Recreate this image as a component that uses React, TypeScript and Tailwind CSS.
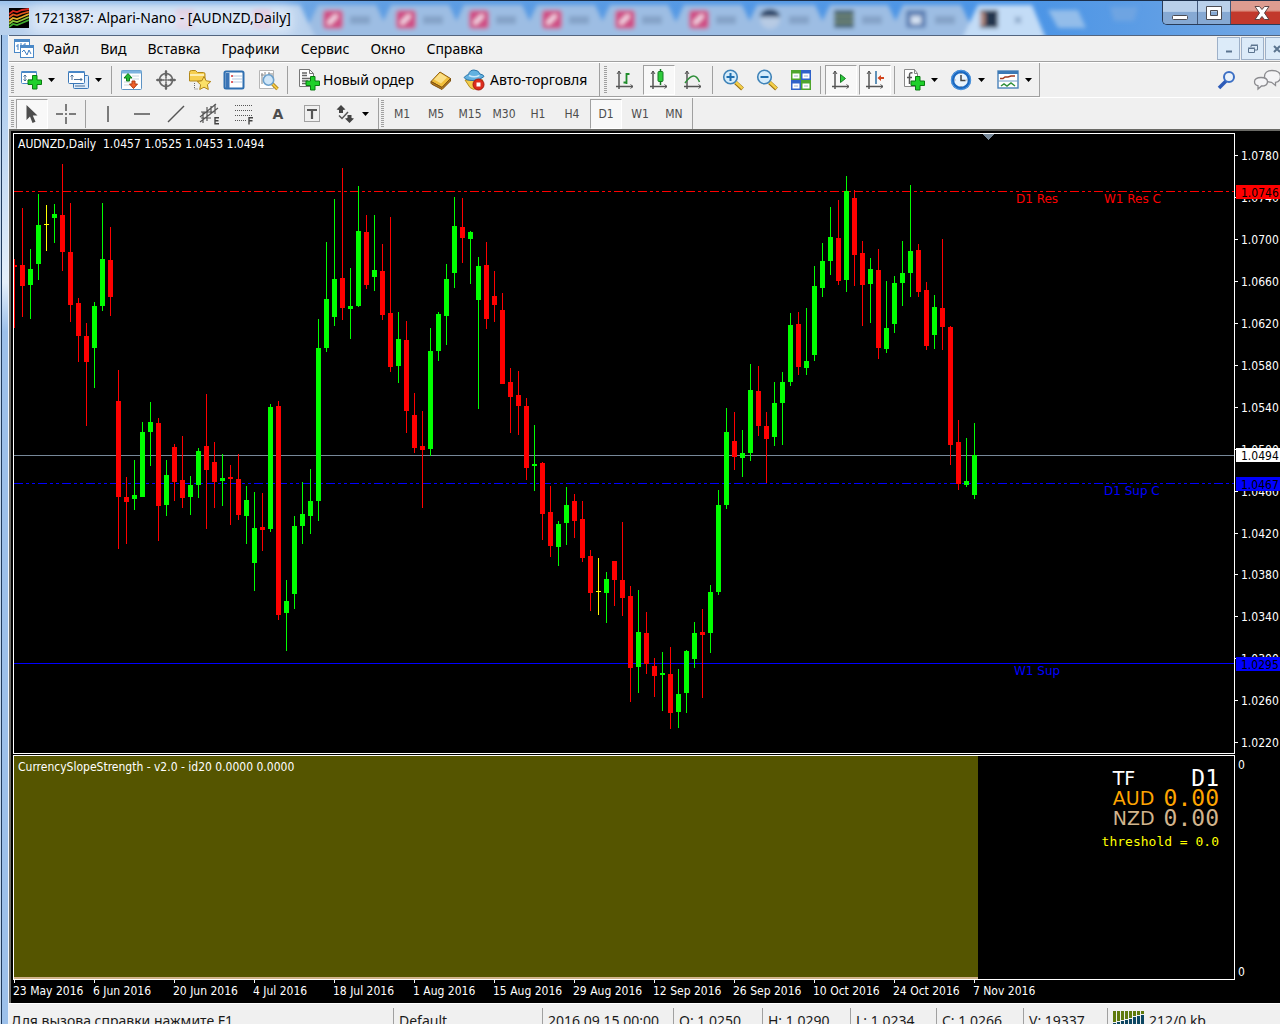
import React from 'react';

type Candle = [string, number, number, number, number];

// colour, high, body top, body bottom, low (rows in the terminal window)
const candles: Candle[] = [
  ['r', 259, 265, 267, 328], ['r', 208, 265, 286, 317], ['g', 249, 269, 285, 319], ['g', 194, 225, 264, 280],
  ['y', 205, 224, 225, 251], ['g', 204, 214, 218, 243], ['r', 164, 215, 252, 271], ['r', 203, 252, 305, 322],
  ['r', 298, 303, 336, 362], ['r', 323, 336, 362, 426], ['g', 302, 306, 348, 388], ['g', 203, 259, 306, 311],
  ['r', 227, 260, 297, 316], ['r', 370, 401, 497, 549], ['r', 477, 497, 502, 544], ['g', 460, 495, 499, 510],
  ['g', 422, 432, 497, 497], ['g', 402, 422, 432, 466], ['r', 418, 423, 506, 541], ['g', 460, 475, 505, 516],
  ['r', 444, 447, 482, 501], ['r', 436, 480, 498, 508], ['g', 476, 485, 497, 515], ['g', 448, 451, 485, 498],
  ['r', 394, 446, 470, 529], ['r', 442, 462, 482, 508], ['g', 454, 478, 481, 506], ['r', 465, 477, 479, 525],
  ['r', 454, 479, 515, 520], ['g', 486, 500, 516, 544], ['g', 492, 528, 563, 591], ['r', 493, 527, 530, 551],
  ['g', 404, 407, 529, 532], ['r', 401, 406, 615, 620], ['g', 580, 601, 613, 651], ['g', 516, 526, 594, 609],
  ['g', 482, 514, 526, 544], ['g', 469, 501, 516, 534], ['g', 319, 348, 501, 521], ['g', 242, 299, 348, 352],
  ['g', 199, 279, 317, 326], ['r', 168, 278, 308, 320], ['g', 268, 306, 309, 339], ['g', 186, 231, 306, 307],
  ['r', 215, 232, 285, 289], ['g', 215, 270, 277, 291], ['r', 244, 271, 315, 320], ['r', 217, 313, 367, 372],
  ['g', 312, 339, 366, 383], ['r', 321, 340, 411, 433], ['r', 393, 415, 448, 453], ['r', 411, 446, 450, 508],
  ['g', 328, 351, 449, 456], ['g', 312, 314, 351, 361], ['g', 264, 279, 316, 345], ['g', 197, 226, 273, 288],
  ['r', 198, 227, 238, 263], ['g', 231, 232, 239, 284], ['g', 257, 266, 300, 409], ['r', 242, 265, 319, 329],
  ['r', 271, 296, 305, 322], ['r', 293, 310, 384, 384], ['r', 368, 382, 397, 433], ['r', 371, 395, 406, 435],
  ['r', 398, 406, 468, 480], ['g', 425, 464, 466, 491], ['r', 462, 463, 514, 540], ['r', 486, 512, 546, 557],
  ['g', 521, 524, 547, 566], ['g', 487, 505, 523, 545], ['r', 494, 501, 521, 538], ['r', 501, 519, 558, 562],
  ['r', 550, 556, 593, 611], ['y', 558, 591, 592, 615], ['g', 572, 579, 593, 623], ['r', 561, 561, 580, 606],
  ['r', 522, 580, 598, 616], ['r', 586, 596, 668, 702], ['g', 590, 632, 667, 693], ['r', 612, 633, 664, 674],
  ['r', 658, 666, 676, 697], ['g', 652, 673, 675, 711], ['r', 647, 674, 713, 729], ['g', 669, 694, 712, 728],
  ['g', 650, 651, 693, 713], ['g', 622, 633, 659, 668], ['r', 609, 632, 635, 698], ['g', 585, 592, 633, 653],
  ['g', 490, 505, 592, 595], ['g', 408, 432, 505, 509], ['r', 412, 441, 457, 470], ['g', 430, 453, 458, 477],
  ['g', 364, 390, 453, 461], ['r', 366, 391, 426, 436], ['r', 412, 426, 439, 483], ['g', 382, 403, 437, 446],
  ['g', 372, 382, 403, 445], ['g', 313, 325, 382, 386], ['r', 312, 324, 367, 375], ['g', 308, 361, 368, 375],
  ['g', 266, 286, 355, 361], ['g', 243, 261, 288, 297], ['g', 207, 237, 261, 275], ['r', 200, 238, 281, 285],
  ['g', 176, 191, 280, 292], ['r', 190, 198, 255, 286], ['r', 241, 253, 285, 326], ['g', 258, 269, 284, 323],
  ['r', 249, 270, 348, 359], ['g', 281, 328, 349, 353], ['g', 276, 283, 324, 333], ['g', 241, 273, 283, 306],
  ['g', 185, 251, 273, 297], ['r', 244, 250, 292, 297], ['r', 282, 290, 346, 350], ['g', 295, 307, 335, 349],
  ['r', 239, 308, 327, 350], ['r', 326, 327, 445, 465], ['r', 420, 442, 484, 490], ['g', 438, 481, 485, 487],
  ['g', 423, 455, 495, 499],
];

const candleColor: Record<string, string> = { r: '#ff0000', g: '#00ff00', y: '#ffff00' };

// first drawable row of the price pane
const PANE_TOP = 134;

const priceMarks: [string, number][] = [
  ['1.0780', 155], ['1.0740', 197], ['1.0700', 239], ['1.0660', 281], ['1.0620', 323],
  ['1.0580', 365], ['1.0540', 407], ['1.0500', 449], ['1.0460', 491], ['1.0420', 533],
  ['1.0380', 574], ['1.0340', 616], ['1.0300', 658], ['1.0260', 700], ['1.0220', 742],
];

const priceTags = [
  { value: '1.0746', y: 185, bg: '#ff0000' },
  { value: '1.0494', y: 448, bg: '#ffffff' },
  { value: '1.0467', y: 477, bg: '#0000ff' },
  { value: '1.0295', y: 657, bg: '#0000ff' },
];

const dates = [
  '23 May 2016', '6 Jun 2016', '20 Jun 2016', '4 Jul 2016', '18 Jul 2016', '1 Aug 2016', '15 Aug 2016',
  '29 Aug 2016', '12 Sep 2016', '26 Sep 2016', '10 Oct 2016', '24 Oct 2016', '7 Nov 2016',
];

const menu = ['Файл', 'Вид', 'Вставка', 'Графики', 'Сервис', 'Окно', 'Справка'];
const periods = ['M1', 'M5', 'M15', 'M30', 'H1', 'H4', 'D1', 'W1', 'MN'];

const chartFont = 'font-[DejaVu_Sans_Condensed,Tahoma,sans-serif]';

/* ---------- toolbar parts ---------- */

const Icon = ({ children }: { children: React.ReactNode }) => (
  <svg width="22" height="22" viewBox="0 0 22 22" fill="none" className="shrink-0">
    {children}
  </svg>
);

const Grip = () => (
  <div className="ml-[2px] mr-px h-[27px] w-[3px] shrink-0 bg-[repeating-linear-gradient(to_bottom,#a0a0a0_0_1px,transparent_1px_2px)]" />
);

const Sep = () => <div className="ml-[2px] mr-[3px] h-[28px] w-px shrink-0 bg-[#a0a0a0]" />;

const Tool = ({ label, pressed, children }: { label: string; pressed?: boolean; children: React.ReactNode }) => (
  <button
    type="button"
    aria-label={label}
    className={
      pressed
        ? 'mx-px flex h-[30px] w-8 shrink-0 items-center justify-center border border-b-white border-l-[#a0a0a0] border-r-white border-t-[#a0a0a0] bg-[#f8f8f8]'
        : 'flex h-[30px] w-[34px] shrink-0 items-center justify-center'
    }
  >
    {children}
  </button>
);

const DropTool = ({ label, children }: { label: string; children: React.ReactNode }) => (
  <button type="button" aria-label={label} className="flex h-[30px] w-[47px] shrink-0 items-center gap-[6px] pl-[5px]">
    {children}
    <svg width="7" height="4" viewBox="0 0 7 4" className="shrink-0">
      <path d="M0 0h7L3.500 4z" fill="#000" />
    </svg>
  </button>
);

const Plus = ({ x, y }: { x: number; y: number }) => (
  <path
    transform={`translate(${x} ${y})`}
    d="M4.500 -.5h4.500v4.500h4.500v4.500h-4.500v4.500h-4.500v-4.500h-4.500v-4.500h4.500z"
    fill="#1fd02a"
    stroke="#0b7d12"
  />
);

const Axes = () => (
  <g stroke="#555" strokeWidth="1.500">
    <path d="M5 2v18M2 17.500h17" />
    <path d="M3 5l2-3 2 3M16.500 15.500l2.500 2-2.500 2" strokeWidth="1" />
  </g>
);

const Lens = ({ sign }: { sign: string }) => (
  <Icon>
    <path d="M13.500 13.500l7 6.500" stroke="#9a7010" strokeWidth="4" />
    <path d="M13.500 13l7 6.500" stroke="#f4cf4a" strokeWidth="2.400" />
    <circle cx="8.500" cy="8" r="6.800" fill="#d5ecfb" stroke="#3f83b8" strokeWidth="1.600" />
    <path d={sign === '+' ? 'M4.500 8h8M8.500 4v8' : 'M4.500 8h8'} stroke="#1f6fb0" strokeWidth="2" />
  </Icon>
);

/* ---------- window frame ---------- */

const tabEdges = [312, 385, 458, 531, 604, 678, 751, 824, 897];

const GlassTabs = () => (
  <svg className="absolute left-0 top-0" width="1280" height="35">
    <defs>
      <filter id="frost" x="-5%" y="-20%" width="110%" height="140%">
        <feGaussianBlur stdDeviation="2" />
      </filter>
      <filter id="glow" x="-10%" y="-60%" width="120%" height="220%">
        <feGaussianBlur stdDeviation="7" />
      </filter>
      <linearGradient id="sky" x1="0" x2="1" y1="0" y2="0">
        <stop offset="0" stopColor="#9ec3ec" />
        <stop offset=".3" stopColor="#5f9ee3" />
        <stop offset=".8" stopColor="#4a94e6" />
        <stop offset="1" stopColor="#72a7e4" />
      </linearGradient>
    </defs>
    <rect width="1280" height="35" fill="url(#sky)" />
    <g filter="url(#frost)">
      {tabEdges.map((x) => (
        <g key={x}>
          <path d={`M${x - 10} 38L${x + 6} 4H${x + 64}L${x + 80} 38z`} fill="#9dbde3" />
          {x < 740 && <rect x={x + 11} y="9" width="20" height="19" rx="4" fill="#cf4f86" />}
          {x < 740 && <path d={`M${x + 16} 23l9-9`} stroke="#f6dfec" strokeWidth="4" />}
          <rect x={x + 38} y="15" width="20" height="8" fill="#6d89ad" opacity=".5" />
        </g>
      ))}
      <path d="M-10 38V4H300L316 38z" fill="#b8d0ec" />
      <rect x="175" y="9" width="20" height="18" rx="4" fill="#e08fb2" />
      <rect x="252" y="9" width="20" height="18" rx="4" fill="#dd7fa6" />
      <circle cx="770" cy="18" r="10" fill="#b7cbe4" />
      <path d="M760 16a10 8 0 0 1 20 0z" fill="#2c4568" />
      <rect x="834" y="9" width="20" height="18" fill="#3f5f6e" />
      <path d="M834 15h20M834 21h20" stroke="#8a9e7a" strokeWidth="2" />
      <rect x="906" y="9" width="20" height="18" rx="2" fill="#5d80b4" />
      <rect x="911" y="15" width="10" height="8" fill="#d5e2f2" />
      <path d="M962 38L978 4H1032L1046 38z" fill="#c3dcf6" />
      <rect x="980" y="9" width="18" height="18" fill="#22354e" />
      <rect x="980" y="11" width="5" height="14" fill="#b38b80" />
      <path d="M1015 16l6 6m0-6l-6 6" stroke="#7f9bbd" strokeWidth="2" />
      <path d="M1048 9h30l8 18h-28z" fill="#93bdea" />
      <path d="M1110 6h28l-4 14h-20z" fill="#6ea4e2" />
    </g>
    <rect x="30" y="6" width="262" height="26" fill="#e6effa" opacity=".85" filter="url(#glow)" />
  </svg>
);

const TitleBar = () => (
  <header className="relative h-[35px] shrink-0 overflow-hidden border-t border-[#1c2f4a]">
    <GlassTabs />
    <div className="relative flex h-full items-start">
      <svg width="20" height="20" viewBox="0 0 20 20" className="ml-[9px] mt-[7px] shrink-0">
        <rect width="20" height="20" fill="#000" />
        <g fill="none" strokeWidth="1.800">
          <path d="M0 6l4-3 4 1 5-2 7-1" stroke="#d8261c" />
          <path d="M0 9.500l4-3 4 1 5-2 7-2" stroke="#e0561c" />
          <path d="M0 13l4-3 4 1 5-2 7-3" stroke="#e3b02a" />
          <path d="M0 16l4-3 4 1 5-2 7-3" stroke="#8fc63c" />
          <path d="M0 19l4-3 4 1 5-2 7-3" stroke="#3fae2e" />
        </g>
      </svg>
      <h1 className="ml-[5px] mt-[7px] whitespace-nowrap text-[14px] leading-[20px] text-black">
        1721387: Alpari-Nano - [AUDNZD,Daily]
      </h1>
      <div className="ml-auto flex h-6 shrink-0 overflow-hidden rounded-bl-[5px] border-b border-l border-[#2a3c58]">
        <button type="button" aria-label="Свернуть" className="flex w-[35px] items-center justify-center border-r border-[#41587a] bg-linear-to-b from-[#b9d0ea] from-45% to-[#86a9d3] to-50%">
          <svg width="18" height="14" viewBox="0 0 18 14"><rect x="1.500" y="9.500" width="15" height="4" rx="1" fill="#fff" stroke="#4c4c52" /></svg>
        </button>
        <button type="button" aria-label="Развернуть" className="flex w-[33px] items-center justify-center border-r border-[#41587a] bg-linear-to-b from-[#b9d0ea] from-45% to-[#86a9d3] to-50%">
          <svg width="18" height="14" viewBox="0 0 18 14"><path fillRule="evenodd" d="M1.500 .5h15v13h-15zM5.500 4.500v5h7v-5z" fill="#fff" stroke="#4c4c52" /></svg>
        </button>
        <button type="button" aria-label="Закрыть" className="flex w-[49px] items-center justify-center bg-linear-to-b from-[#dd9c90] from-40% to-[#c2392c] to-50% pl-3">
          <svg width="16" height="14" viewBox="0 0 16 14"><path d="M1 .5h4.500L8 3.500l2.500-3H15L10.500 7l4.500 6.500h-4.500L8 10.500l-2.500 3H1L5.500 7z" fill="#fff" stroke="#5b4545" /></svg>
        </button>
      </div>
    </div>
  </header>
);

const MenuBar = () => (
  <nav className="flex h-[27px] shrink-0 items-center border-b border-t border-b-[#a0a0a0] border-t-[#53657f] bg-[#f0f0f0]">
    <svg width="22" height="20" viewBox="0 0 22 20" className="ml-[4px] mr-[8px] shrink-0" fill="none">
      <rect x="1.500" y=".5" width="15" height="13" fill="#fff" stroke="#4a88c7" />
      <path d="M1.500 2h15" stroke="#4a88c7" strokeWidth="2" />
      <path d="M5 5v6M3 7h2M8 4v5M10 6h2M12 4v4" stroke="#3f7ec2" />
      <rect x="7.500" y="6.500" width="13" height="12" fill="#fff" stroke="#4a88c7" />
      <path d="M7.500 8h13" stroke="#4a88c7" strokeWidth="2" />
      <path d="M9 13l2-2 3 5 2-5 2 4" stroke="#3f7ec2" />
    </svg>
    <ul className="flex gap-[21px] text-[14px] leading-[20px] text-black">
      {menu.map((item) => (
        <li key={item}>
          <button type="button">{item}</button>
        </li>
      ))}
    </ul>
    <div className="ml-auto flex shrink-0 gap-px">
      <button type="button" aria-label="Свернуть окно" className="flex h-[23px] w-[23px] items-center justify-center border border-[#9db0c8] bg-[#dcebf9]">
        <svg width="12" height="10" viewBox="0 0 12 10"><path d="M3 7.500h6" stroke="#5c7590" strokeWidth="2" /></svg>
      </button>
      <button type="button" aria-label="Восстановить окно" className="flex h-[23px] w-[23px] items-center justify-center border border-[#9db0c8] bg-[#dcebf9]">
        <svg width="12" height="10" viewBox="0 0 12 10" fill="none" stroke="#5c7590"><path d="M4 3V1.500h6.500v4.500H8M4 1h7" /><path d="M1.500 4.500h6v4h-6zM1 4h7" /></svg>
      </button>
      <button type="button" aria-label="Закрыть окно" className="flex h-[23px] w-[15px] items-center justify-end border border-r-0 border-[#9db0c8] bg-[#dcebf9]">
        <svg width="7" height="8" viewBox="0 0 7 8"><path d="M1 1l6 6M7 1L1 7" stroke="#5c7590" strokeWidth="2" /></svg>
      </button>
    </div>
  </nav>
);

const MainToolbar = () => (
  <div className="flex h-[35px] shrink-0 border-t border-white bg-[#f0f0f0]">
    <div className="flex w-[591px] shrink-0 items-center border-b border-r border-[#a0a0a0]">
      <Grip />
      <DropTool label="Новый график">
        <Icon>
          <rect x="1.500" y="2.500" width="15" height="12" rx="1" fill="#fff" stroke="#4a88c7" />
          <path d="M1.500 3h15" stroke="#4a88c7" strokeWidth="2" />
          <path d="M5 6v6M3.500 7.500L5 6l1.500 1.500M3.500 10.500L5 12l1.500-1.500M8 11h4" stroke="#4a6f96" />
          <Plus x={8} y={7} />
        </Icon>
      </DropTool>
      <DropTool label="Профили">
        <Icon>
          <rect x="6.500" y="6.500" width="15" height="13" rx="1" fill="#dcebfa" stroke="#3b78b8" />
          <rect x="1.500" y="2.500" width="16" height="12" rx="1" fill="#fff" stroke="#3b78b8" />
          <path d="M1.500 3h16" stroke="#4a88c7" strokeWidth="2" />
          <path d="M5 6v5M3.500 7.500L5 6l1.500 1.500M7 10.500h8M13.500 9l1.500 1.500-1.500 1.500M8 17h10" stroke="#4a6f96" />
        </Icon>
      </DropTool>
      <Sep />
      <Tool label="Обзор рынка">
        <Icon>
          <rect x=".5" y="1.500" width="20" height="19" rx="1" fill="#fff" stroke="#5d93c4" />
          <path d="M.5 3h20" stroke="#7db2df" strokeWidth="3" />
          <path d="M11 7h7M11 10h7M3 13h6M3 16h6" stroke="#c9d6e2" />
          <path d="M3 9l4-4.500L11 9H8.500v3h-3V9z" fill="#24b833" stroke="#0f7a1b" />
          <path d="M8.500 15l4 4.500 4-4.500H14v-3h-3v3z" fill="#f0602a" stroke="#b03a10" />
        </Icon>
      </Tool>
      <Tool label="Окно данных">
        <Icon>
          <circle cx="11" cy="11" r="6.500" stroke="#666" strokeWidth="1.600" />
          <path d="M11 1v20M1 11h20" stroke="#666" strokeWidth="1.400" />
          <path d="M11 2v5M11 15v5M2 11h5M15 11h5" stroke="#666" strokeWidth="2.400" />
          <circle cx="11" cy="11" r="2.500" fill="#f0f0f0" />
          <path d="M11 8v6M8 11h6" stroke="#555" />
        </Icon>
      </Tool>
      <Tool label="Навигатор">
        <Icon>
          <path d="M.5 3.500q0-2 2-2h4l2 2h6q1.500 0 1.500 1.500v7h-15.500z" fill="#f6cf50" stroke="#b48a1a" />
          <path d="M1 6h14" stroke="#fdeeb0" strokeWidth="2" />
          <path d="M5.500 14v6h3" stroke="#666" strokeDasharray="1 1" />
          <path d="M15 7.500l2.200 4.300 4.600.7-3.400 3.200.9 4.800-4.300-2.300-4.300 2.300.9-4.800-3.400-3.200 4.600-.7z" fill="#fbe067" stroke="#b3861a" />
        </Icon>
      </Tool>
      <Tool label="Терминал">
        <Icon>
          <rect x="1.500" y="2.500" width="19" height="17" rx="1.500" fill="#fff" stroke="#2f6fb0" strokeWidth="2" />
          <rect x="2.500" y="4" width="4" height="15" fill="#3a74b6" />
          <path d="M9 7h10M9 10h10M9 13h10" stroke="#b5c9e0" />
          <path d="M8 7h2M8 13h2" stroke="#d33" strokeWidth="1.500" />
        </Icon>
      </Tool>
      <Tool label="Тестер стратегий">
        <Icon>
          <path d="M2.500 1.500h14v18h-14z" fill="#fff" stroke="#b5b5b5" />
          <path d="M5 4v11M8 3v5M12 3v6M15 4v5M4 6h3M11 5h3" stroke="#888" />
          <path d="M15.500 15l5 5" stroke="#a97c14" strokeWidth="3.600" />
          <path d="M15.500 15l5 5" stroke="#f2ca44" strokeWidth="1.800" />
          <circle cx="11.500" cy="11" r="5.200" fill="#cfe6f8" stroke="#6aa0cc" strokeWidth="1.600" />
        </Icon>
      </Tool>
      <Sep />
      <button type="button" className="flex w-[133px] shrink-0 items-center gap-[3px] whitespace-nowrap pl-[7px] text-[14px] leading-[20px]">
        <Icon>
          <path d="M1.500 .5h10l4 4v13h-14z" fill="#fdfdfd" stroke="#777" />
          <path d="M11.500 .5v4h4" stroke="#777" />
          <path d="M4 4h5M4 6.500h5M4 9.500h9M4 12h6M4 14.500h5" stroke="#666" strokeWidth="1.300" />
          <Plus x={8} y={8} />
        </Icon>
        Новый ордер
      </button>
      <Tool label="MetaEditor">
        <Icon>
          <path d="M1 12.500l9-9.500 10.500 6.500-8.500 9z" fill="#f0bd3a" stroke="#8c5c10" />
          <path d="M4 10.500l6-6.500 7 4.500-6 6z" fill="#fbdf86" />
          <path d="M1 12.500q-.5 2 .8 2.700l10.200 5.300 8.500-8.500v-2.500l-8.500 9z" fill="#b87c1c" stroke="#7f5210" />
        </Icon>
      </Tool>
      <button type="button" className="flex w-[137px] shrink-0 items-center gap-[5px] whitespace-nowrap pl-[5px] text-[14px] leading-[20px]">
        <Icon>
          <path d="M2 11h18l-6 8.500q-4 2-7-1z" fill="#f3cd4c" stroke="#b58d1d" />
          <path d="M1 8.500q3-3 4.500-3 1-4.500 5.500-4.500T17 5q3.500.5 4 2.500-4 4-11 4T1 8.500z" fill="#62b1e0" stroke="#2c75a8" />
          <path d="M6 6.500q5 2.500 10.500 0" stroke="#c9e8fa" strokeWidth="1.500" />
          <circle cx="15.500" cy="15.500" r="5.500" fill="#dd2c1c" stroke="#a31a10" />
          <rect x="13.500" y="13.500" width="4" height="4" fill="#fff" />
        </Icon>
        Авто-торговля
      </button>
    </div>
    <div className="flex w-[440px] shrink-0 items-center border-b border-r border-[#a0a0a0] pl-[2px]">
      <Grip />
      <Tool label="Бары">
        <Icon>
          <Axes />
          <path d="M12.500 4v11M12.500 5h3M9.500 13.500h3" stroke="#1f8c2b" strokeWidth="1.800" />
        </Icon>
      </Tool>
      <Tool label="Японские свечи" pressed>
        <Icon>
          <Axes />
          <path d="M12.500 0v16" stroke="#157a22" strokeWidth="1.500" />
          <rect x="10" y="2.500" width="5" height="10" rx="1" fill="#2ecc3c" stroke="#157a22" />
        </Icon>
      </Tool>
      <Tool label="Линия">
        <Icon>
          <Axes />
          <path d="M3 14q5-7 8.500-7t6 6" stroke="#2f8f3a" strokeWidth="1.500" />
        </Icon>
      </Tool>
      <Sep />
      <Tool label="Увеличить"><Lens sign="+" /></Tool>
      <Tool label="Уменьшить"><Lens sign="-" /></Tool>
      <Tool label="Мозаика">
        <Icon>
          <rect x="1" y="1" width="10" height="10" fill="#4ea52c" /><rect x="11" y="1" width="10" height="10" fill="#2f62c9" />
          <rect x="1" y="11" width="10" height="10" fill="#2f62c9" /><rect x="11" y="11" width="10" height="10" fill="#4ea52c" />
          <path d="M2.500 4.500h7v5h-7zM12.500 4.500h7v5h-7zM2.500 14.500h7v5h-7zM12.500 14.500h7v5h-7z" fill="#fff" />
          <path d="M4 7h4M14 7h4M4 17h4M14 17h4" stroke="#9fb6cc" />
        </Icon>
      </Tool>
      <Sep />
      <Tool label="Автопрокрутка" pressed>
        <Icon>
          <Axes />
          <path d="M10.500 5.500l5 4-5 4z" fill="#2ecc3c" stroke="#157a22" />
        </Icon>
      </Tool>
      <Tool label="Сдвиг графика" pressed>
        <Icon>
          <Axes />
          <path d="M12 2v13" stroke="#2d6fa3" strokeWidth="1.500" />
          <path d="M13.500 9l3.500-3v2h3v2h-3v2z" fill="#d2451e" />
        </Icon>
      </Tool>
      <Sep />
      <DropTool label="Индикаторы">
        <Icon>
          <path d="M1.500 .5h10l3 4v13h-13z" fill="#fdfdfd" stroke="#888" />
          <path d="M11.500 .5v4h3" stroke="#888" />
          <path d="M9.500 4q-3-1-3 2v9M4 8.500h5" stroke="#555" strokeWidth="1.500" />
          <Plus x={8} y={8} />
        </Icon>
      </DropTool>
      <DropTool label="Периоды">
        <Icon>
          <circle cx="11" cy="11" r="8.500" fill="#e9f3fc" stroke="#1b68c0" strokeWidth="3.400" />
          <circle cx="11" cy="11" r="9.500" stroke="#5fa8ec" strokeWidth=".8" />
          <path d="M11 6v5.500h4.500" stroke="#444" strokeWidth="1.500" />
          <path d="M11 4v1M11 17v1M4.500 11h1M16.500 11h1" stroke="#777" />
        </Icon>
      </DropTool>
      <DropTool label="Шаблоны">
        <Icon>
          <rect x="1" y="2" width="20" height="17" fill="#fff" stroke="#4a82b8" strokeWidth="1.400" />
          <path d="M1 3.500h20" stroke="#3c79b5" strokeWidth="3" />
          <path d="M1 12h20" stroke="#6f9cc6" />
          <path d="M3 9.500h3l2-1.500h3l3-1h4" stroke="#a33a1e" strokeWidth="1.500" />
          <path d="M4 17l3-2 3 2 4-3 4 3" stroke="#2f8f3a" strokeWidth="1.500" />
        </Icon>
      </DropTool>
    </div>
    <div className="ml-auto flex shrink-0 items-center gap-[15px] overflow-hidden">
      <button type="button" aria-label="Поиск">
        <Icon>
          <path d="M10 12l-7 7" stroke="#2d5bb8" strokeWidth="3.500" />
          <circle cx="13" cy="8" r="5" fill="#eaf2fb" stroke="#3c6fc4" strokeWidth="2" />
        </Icon>
      </button>
      <button type="button" aria-label="Чат">
        <svg width="27" height="22" viewBox="0 0 27 22" fill="#f4f4f6" stroke="#8b8b8f" strokeWidth="1.300">
          <path d="M19 1.500c6 0 8.500 2.500 8.500 6s-2.500 5.500-5 5.800v3.200l-4-3.200c-5 0-7-2.500-7-5.800s2.500-6 7.500-6z" />
          <path d="M8 8.500c4 0 6.500 1.500 6.500 4.200S12 17 8.500 17L5 20v-3.300c-2.500-.5-3.500-2-3.500-4 0-2.700 2.500-4.200 6.500-4.200z" />
        </svg>
      </button>
    </div>
  </div>
);

const DrawToolbar = () => (
  <div className="flex h-8 shrink-0 border-t border-white bg-[#f0f0f0] text-[#4d4d4d]">
    <div className="flex w-[370px] shrink-0 items-center border-r border-[#a0a0a0]">
      <Grip />
      <Tool label="Курсор" pressed>
        <Icon><path d="M5.500 2v15l3.500-3.500 2.500 6.500 3-1.200-2.700-6.300h4.700z" fill="#4d4d4d" /></Icon>
      </Tool>
      <Tool label="Перекрестие">
        <Icon><path d="M11 1v7M11 14v7M1 11h7M14 11h7M10 11h2" stroke="#555" strokeWidth="1.500" /></Icon>
      </Tool>
      <Sep />
      <div className="flex pl-[2px]">
        <Tool label="Вертикальная линия"><Icon><path d="M11 3v16" stroke="#555" strokeWidth="1.500" /></Icon></Tool>
        <Tool label="Горизонтальная линия"><Icon><path d="M3 11h16" stroke="#555" strokeWidth="1.500" /></Icon></Tool>
        <Tool label="Трендовая линия"><Icon><path d="M3 19L19 3" stroke="#555" strokeWidth="1.500" /></Icon></Tool>
        <Tool label="Канал">
          <Icon>
            <path d="M1 14L17 1M1 19L19 5M2 9h13M2 15h10M8 4v14M12 3v8M16 1v10M4 9v11" stroke="#555" strokeWidth="1.200" />
            <path d="M20 14.700h-4v6h4M16 17.700h3.500" stroke="#444" strokeWidth="1.400" />
          </Icon>
        </Tool>
        <Tool label="Фибоначчи">
          <Icon>
            <path d="M2 2.500h18M2 7.500h18M2 12.500h18M2 17.500h11" stroke="#555" strokeWidth="1.200" strokeDasharray="1 1" />
            <path d="M20 14.700h-4v6.700M16 17.700h3.500" stroke="#444" strokeWidth="1.400" />
          </Icon>
        </Tool>
        <Tool label="Текст"><span className="font-[DejaVu_Sans,sans-serif] text-[14px] font-bold leading-[20px]">A</span></Tool>
        <Tool label="Текстовая метка">
          <Icon>
            <rect x="3.500" y="2.500" width="15" height="16" stroke="#555" strokeDasharray="1 1" />
            <path d="M6 7h10M11 7v9" stroke="#555" strokeWidth="2.200" />
          </Icon>
        </Tool>
        <DropTool label="Стрелки">
          <Icon>
            <path d="M7 2l4.500 4.500L9 7v3H5V7L2.500 6.500z M15.500 20l-4.500-4.500 2.500-.5v-3h4v3l2.500.5z" fill="#444" />
            <path d="M5 12.500l3 3L14 9" stroke="#555" strokeWidth="1.500" />
          </Icon>
        </DropTool>
      </div>
    </div>
    <div className={`flex w-[314px] shrink-0 items-center border-r border-[#a0a0a0] text-[12px] leading-[16px] ${chartFont}`}>
      <Grip />
      {periods.map((p) => (
        <Tool key={p} label={p} pressed={p === 'D1'}>
          {p}
        </Tool>
      ))}
    </div>
  </div>
);

/* ---------- chart ---------- */

const PricePane = () => (
  <div className="flex min-h-0 flex-1">
    <div className="min-w-0 flex-1 border border-white">
      <svg width="100%" height="100%" className={`block ${chartFont}`} shapeRendering="crispEdges">
        <g transform={`translate(0 ${-PANE_TOP})`}>
          <g strokeWidth="1">
            <line x1="0" x2="100%" y1="191.500" y2="191.500" stroke="#ff0000" strokeDasharray="9 3 3 3 3 3" />
            <line x1="0" x2="100%" y1="455.500" y2="455.500" stroke="#778899" />
            <line x1="0" x2="100%" y1="483.500" y2="483.500" stroke="#0000ff" strokeDasharray="9 3 3 3 3 3" />
            <line x1="0" x2="100%" y1="663.500" y2="663.500" stroke="#0000ff" />
          </g>
          {candles.map(([kind, high, top, bottom, low], i) => (
            <g key={i} fill={candleColor[kind]}>
              <rect x={i * 8} y={high} width="1" height={low - high} />
              <rect x={i * 8 - 2} y={top} width="5" height={bottom - top} />
            </g>
          ))}
          <path d="M969 134h11l-5.500 6z" fill="#778899" />
          <text x="4" y="148" fontSize="12" fill="#fff" xmlSpace="preserve">
            {'AUDNZD,Daily  1.0457 1.0525 1.0453 1.0494'}
          </text>
          <g fontSize="12" fontFamily="DejaVu Sans, sans-serif">
            <text x="1002" y="203" fill="#ff0000">D1 Res</text>
            <text x="1090" y="203" fill="#ff0000">W1 Res C</text>
            <text x="1090" y="495" fill="#0000ff">D1 Sup C</text>
            <text x="1000" y="675" fill="#0000ff">W1 Sup</text>
          </g>
        </g>
      </svg>
    </div>
    <svg width="45" height="100%" className={`block shrink-0 ${chartFont}`} fontSize="12" fill="#fff">
      <g transform={`translate(0 ${1 - PANE_TOP})`}>
        {priceMarks.map(([value, y]) => (
          <g key={value}>
            <rect x="0" y={y} width="3" height="1" />
            <text x="6" y={y + 5}>{value}</text>
          </g>
        ))}
        {priceTags.map((tag) => (
          <g key={tag.value}>
            <rect x="1" y={tag.y} width="44" height="14" fill={tag.bg} />
            <text x="6" y={tag.y + 12} fill="#000">{tag.value}</text>
          </g>
        ))}
      </g>
    </svg>
  </div>
);

const IndicatorPane = () => (
  <div className="mt-px flex h-[225px] shrink-0">
    <div className="relative flex min-w-0 flex-1 justify-between border border-white">
      <div className="h-full w-[964px] border-b-2 border-[#d2b48c] bg-[#555500]">
        <p className={`ml-1 mt-[3px] whitespace-nowrap text-[12px] leading-[16px] text-white ${chartFont}`}>
          CurrencySlopeStrength - v2.0 - id20 0.0000 0.0000
        </p>
      </div>
      <div className="mr-[15px] mt-3 text-right font-[DejaVu_Sans_Mono,monospace]">
        <dl className="grid grid-cols-[auto_auto] justify-end gap-x-[9px] text-[23px] leading-[20px]">
          <dt className="text-left font-[DejaVu_Sans,sans-serif] text-[19px] text-white">TF</dt>
          <dd className="text-white">D1</dd>
          <dt className="text-left font-[DejaVu_Sans,sans-serif] text-[19px] text-[#ffa500]">AUD</dt>
          <dd className="text-[#ffa500]">0.00</dd>
          <dt className="text-left font-[DejaVu_Sans,sans-serif] text-[19px] text-[#d2b48c]">NZD</dt>
          <dd className="text-[#d2b48c]">0.00</dd>
        </dl>
        <p className="mt-1 text-[13px] leading-[20px] text-[#ffff00]">threshold = 0.0</p>
      </div>
    </div>
    <div className={`flex w-[45px] shrink-0 flex-col justify-between pl-[3px] pt-[2px] text-[12px] leading-[16px] text-white ${chartFont}`}>
      <span>0</span>
      <span>0</span>
    </div>
  </div>
);

const DateAxis = () => (
  <div className={`flex h-[23px] shrink-0 overflow-hidden text-[12px] leading-[16px] text-white ${chartFont}`}>
    {dates.map((d) => (
      <div key={d} className="flex w-[80px] shrink-0 flex-col whitespace-nowrap">
        <span className="ml-px h-[3px] w-px bg-white" />
        <span>{d}</span>
      </div>
    ))}
  </div>
);

const StatusBar = () => (
  <footer className="flex h-[21px] shrink-0 overflow-hidden border-t border-white bg-[#f0f0f0] pt-1 text-[14px] leading-[26px] text-[#1a1a1a]">
    <span className="w-[384px] shrink-0 overflow-hidden whitespace-nowrap pl-[2px]">Для вызова справки нажмите F1</span>
    <span className="w-[149px] shrink-0 border-l border-[#a0a0a0] pl-[5px]">Default</span>
    <span className="w-[131px] shrink-0 whitespace-nowrap border-l border-[#a0a0a0] pl-[5px]">2016.09.15 00:00</span>
    <span className="w-[89px] shrink-0 border-l border-[#a0a0a0] pl-[5px]">O: 1.0250</span>
    <span className="w-[88px] shrink-0 border-l border-[#a0a0a0] pl-[5px]">H: 1.0290</span>
    <span className="w-[86px] shrink-0 border-l border-[#a0a0a0] pl-[5px]">L: 1.0234</span>
    <span className="w-[87px] shrink-0 border-l border-[#a0a0a0] pl-[5px]">C: 1.0266</span>
    <span className="w-[84px] shrink-0 border-l border-[#a0a0a0] pl-[5px]">V: 19337</span>
    <span className="flex flex-1 items-start gap-[5px] whitespace-nowrap border-l border-[#a0a0a0] pl-[5px]">
      <svg width="31" height="14" viewBox="0 0 31 14" className="mt-[3px] shrink-0">
        {[12, 11, 10, 9, 8, 6, 5, 4].map((h, i) => (
          <g key={i}>
            <rect x={i * 4} y="0" width="3" height={h - 1} fill="#5f7a0c" />
            <rect x={i * 4} y={h} width="3" height={14 - h} fill="#0d4763" />
          </g>
        ))}
      </svg>
      212/0 kb
    </span>
  </footer>
);

const App: React.FC = () => {
  return (
    <div className="flex h-screen w-full flex-col overflow-hidden bg-[#a9c9ec] font-[Noto_Sans,sans-serif]">
      <TitleBar />
      <div className="flex min-h-0 flex-1">
        <div className="w-2 shrink-0 border-l border-[#c4d8ee] bg-linear-to-b from-[#9fc2ea] via-[#e4effa] via-25% to-[#9cc0ea] to-30%">
          <div className="h-full w-px bg-[#1f3a5c]" />
        </div>
        <main className="flex min-w-0 flex-1 flex-col border-l border-[#eef4fb]">
          <MenuBar />
          <MainToolbar />
          <DrawToolbar />
          <section className="flex min-h-0 flex-1 flex-col border-l-2 border-t-2 border-[#6a6a66] bg-black pl-[2px] pt-[2px]">
            <PricePane />
            <IndicatorPane />
            <DateAxis />
          </section>
          <StatusBar />
        </main>
      </div>
    </div>
  );
};

export default App;
